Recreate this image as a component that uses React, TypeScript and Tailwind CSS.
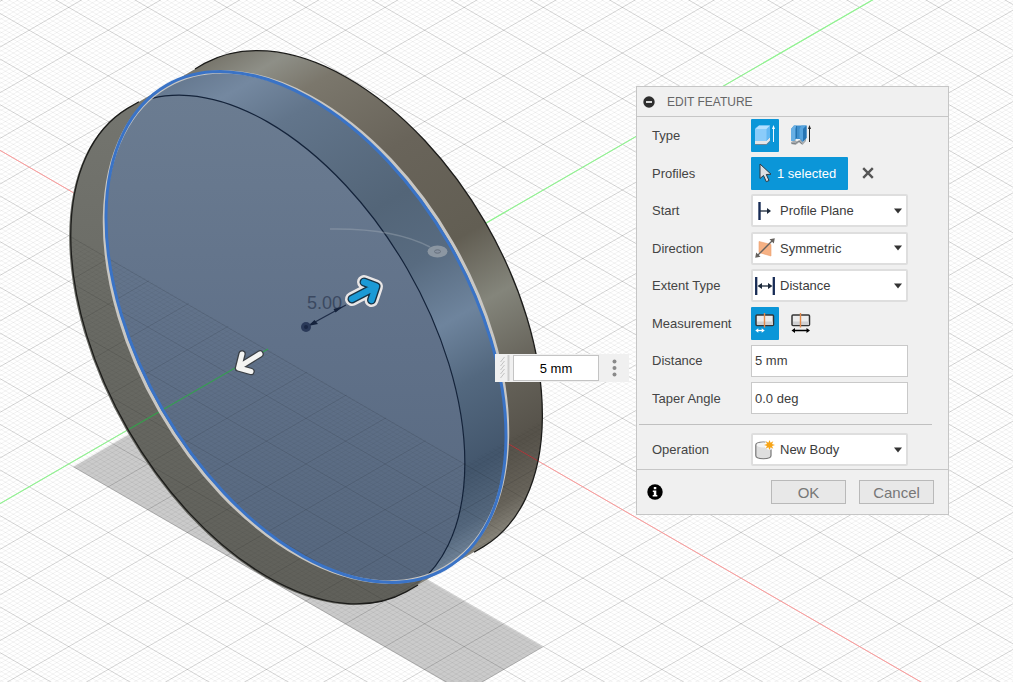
import React, { useState } from "react";
import type { ReactNode } from "react";

const ORIGIN = { x: 306, y: 327 };
const SLOPE = 0.5773;
const MAJOR = 45.66;
const DIVISIONS = 10;
const SPAN = 3000;

function gridPath(minor: boolean): string {
  const parts: string[] = [];
  const count = 50 * DIVISIONS;
  for (let i = -count; i <= count; i++) {
    const isMajor = i % DIVISIONS === 0;
    if (isMajor === minor) continue;
    const y = ORIGIN.y + (i * MAJOR) / DIVISIONS;
    for (const s of [SLOPE, -SLOPE]) {
      parts.push(
        `M${ORIGIN.x - SPAN} ${(y - s * SPAN).toFixed(2)}L${ORIGIN.x + SPAN} ${(y + s * SPAN).toFixed(2)}`
      );
    }
  }
  return parts.join("");
}

const MINOR_GRID = gridPath(true);
const MAJOR_GRID = gridPath(false);

const BODY =
  "M127.5 108.4L204.5 63.4A279 165.5 60 0 1 483.5 546.6L406.5 591.6A279 162 60 0 1 127.5 108.4Z";
const BLUE_ARROW = "M352 299L375 287M364 282L376 286.5L371.500 300";
const WHITE_ARROW = "M260 354L239 367M242 354L238.500 368L251 371.500";

function Scene() {
  return (
    <svg className="block h-full w-full" role="img" aria-label="Extruded disc on the ground plane">
      <defs>
        <linearGradient id="rim" gradientUnits="userSpaceOnUse" x1="204" y1="63" x2="483.500" y2="546.600">
          <stop offset="0" stopColor="#77756b" />
          <stop offset="0.06" stopColor="#8e8f87" />
          <stop offset="0.13" stopColor="#7b776c" />
          <stop offset="0.3" stopColor="#69645a" />
          <stop offset="0.5" stopColor="#625e53" />
          <stop offset="0.62" stopColor="#84857b" />
          <stop offset="0.75" stopColor="#66635a" />
          <stop offset="0.87" stopColor="#56524a" />
          <stop offset="0.95" stopColor="#67635a" />
          <stop offset="1" stopColor="#8a877d" />
        </linearGradient>
        <linearGradient id="rimBlue" gradientUnits="userSpaceOnUse" x1="204" y1="63" x2="483.500" y2="546.600">
          <stop offset="0" stopColor="#65788f" />
          <stop offset="0.07" stopColor="#7488a0" />
          <stop offset="0.16" stopColor="#62758b" />
          <stop offset="0.38" stopColor="#536578" />
          <stop offset="0.5" stopColor="#586b80" />
          <stop offset="0.62" stopColor="#6e849d" />
          <stop offset="0.73" stopColor="#53687f" />
          <stop offset="0.87" stopColor="#43566c" />
          <stop offset="0.95" stopColor="#54677d" />
          <stop offset="1" stopColor="#72859a" />
        </linearGradient>
        <linearGradient id="face" gradientUnits="userSpaceOnUse" x1="0" y1="95" x2="0" y2="605">
          <stop offset="0" stopColor="#74756f" />
          <stop offset="0.5" stopColor="#686963" />
          <stop offset="1" stopColor="#60605a" />
        </linearGradient>
        <linearGradient id="faceBlue" gradientUnits="userSpaceOnUse" x1="0" y1="95" x2="0" y2="590">
          <stop offset="0" stopColor="#6b7c91" />
          <stop offset="0.5" stopColor="#607189" />
          <stop offset="1" stopColor="#56677e" />
        </linearGradient>
        <clipPath id="profileClip">
          <ellipse rx="279" ry="165.500" transform="translate(306 327) rotate(60)" />
        </clipPath>
        <clipPath id="frontClip">
          <ellipse rx="279" ry="162" transform="translate(267 350) rotate(60)" />
        </clipPath>
        <clipPath id="bodyClip">
          <path d={BODY} />
        </clipPath>
        <clipPath id="belowPlane">
          <path d="M0 194.300L466 464L560 410V720H0Z" />
        </clipPath>
      </defs>

      <rect width="100%" height="100%" fill="#fff" />
      <path d="M73 467L152 421L543 647L464 693Z" fill="#cbcbcb" />
      <path d={MINOR_GRID} stroke="#000" strokeOpacity="0.05" fill="none" />
      <path d={MAJOR_GRID} stroke="#000" strokeOpacity="0.17" fill="none" />
      <path d="M-2700 -1408.400L306 327L3306 2058.900" stroke="#ff9a9a" fill="none" />
      <path d="M-2700 2062.400L306 327L3306 -1404.900" stroke="#8ff58f" strokeWidth="1.200" fill="none" />

      <path d={BODY} fill="url(#rim)" />
      <g clipPath="url(#frontClip)">
        <rect x="50" y="80" width="450" height="540" fill="url(#face)" />
      </g>
      <g clipPath="url(#profileClip)">
        <path d={BODY} fill="url(#rimBlue)" />
        <g clipPath="url(#frontClip)">
          <rect x="50" y="80" width="450" height="540" fill="url(#faceBlue)" />
        </g>
        <ellipse
          rx="279"
          ry="162"
          transform="translate(267 350) rotate(60)"
          fill="none"
          stroke="#14233a"
          strokeWidth="1.200"
        />
      </g>
      <g clipPath="url(#bodyClip)">
        <g clipPath="url(#belowPlane)">
          <path d={MINOR_GRID} stroke="#000" strokeOpacity="0.035" fill="none" />
          <path d={MAJOR_GRID} stroke="#000" strokeOpacity="0.11" fill="none" />
        </g>
        <path d="M0 503.700L268 349" stroke="#2fae4a" strokeOpacity="0.8" strokeWidth="1.200" />
        <path d="M507 443L560 473.600" stroke="#b0383c" />
      </g>

      <path
        d="M418 585L406.500 591.600A279 162 60 0 1 127.500 108.400L139 101.700M195 69L204.500 63.400A279 165.500 60 0 1 483.500 546.600L474 552.200"
        fill="none"
        stroke="#1c1c1a"
        strokeWidth="1.300"
      />
      <ellipse
        rx="278"
        ry="168.500"
        transform="translate(306 327) rotate(60)"
        fill="none"
        stroke="#c9c7c3"
        strokeWidth="3.400"
      />
      <ellipse
        rx="279"
        ry="165.500"
        transform="translate(306 327) rotate(60)"
        fill="none"
        stroke="#3a73c6"
        strokeWidth="3"
      />

      <path d="M330 229Q394 228 430 247" fill="none" stroke="#a4afba" strokeOpacity="0.4" strokeWidth="1.500" />
      <ellipse cx="437.500" cy="251.500" rx="10" ry="6" fill="#98a1aa" fillOpacity="0.8" />
      <ellipse cx="437.500" cy="251.500" rx="3" ry="1.700" fill="#8791a0" stroke="#66707c" />

      <text
        x="307"
        y="309"
        fontSize="18"
        fill="#3b4961"
        className="font-['Liberation_Sans',Arial,sans-serif]"
      >
        5.00
      </text>
      <path d="M306 327L346 305" stroke="#1f2d48" strokeWidth="1.300" />
      <path d="M308 326L314.500 320L318 324ZM343 306.500L333.500 309L335.500 312.500Z" fill="#14223c" />
      <circle cx="306" cy="327" r="5" fill="#2a3958" />
      <circle cx="306" cy="327" r="2" fill="#1a2744" />

      <g fill="none" strokeLinecap="round" strokeLinejoin="round">
        <path d={WHITE_ARROW} stroke="#3b4046" strokeWidth="7.500" />
        <path d={WHITE_ARROW} stroke="#f4f4f2" strokeWidth="5" />
        <path d={BLUE_ARROW} stroke="#e9e6e6" strokeWidth="14" />
        <path d={BLUE_ARROW} stroke="#173447" strokeWidth="9" />
        <path d={BLUE_ARROW} stroke="#1b9ad6" strokeWidth="6.200" />
      </g>
    </svg>
  );
}

function ExtrudeIcon() {
  return (
    <svg width="20" height="21" viewBox="0 0 20 21" aria-hidden="true">
      <path d="M0 15.500V19H11.500L15 15.500V12L11.500 15.500Z" fill="#e4e6e8" />
      <path d="M0 19.500H11.700L15.300 16" fill="none" stroke="#6d8494" />
      <path d="M0 4Q0 3 1 2.500L4 .5H15V12L11.500 16H0Z" fill="#62b8f3" />
      <path d="M.5 4L4 .5H15L11.500 4Z" fill="#b4e0ff" />
      <path d="M0 4H11.500V16H0Z" fill="#8accfa" />
      <path d="M18.500 3V17" stroke="#eef8ff" />
      <path d="M18.500 0L20 4H17Z" fill="#fff" />
    </svg>
  );
}

function ThinExtrudeIcon() {
  return (
    <svg width="20" height="21" viewBox="0 0 20 21" aria-hidden="true">
      <path d="M0 17L4 15L6 16.500L10 14L12 17L15 13V16L11.500 20L8 17.500L4.500 20L0 19Z" fill="#a7abae" />
      <path d="M1 18.500L4.500 18.500L8 16L11 19" fill="none" stroke="#73787c" strokeWidth=".8" />
      <path d="M0 4L3 .5H15.500V13L11.500 17L9 14H5L3 16H0Z" fill="#3f8fcd" />
      <path d="M0 4L3 .5H5.500L4 4V15L2.500 16H0Z" fill="#68afe4" />
      <path d="M8.500 4L10.500 .5H15.500L12 4V16L8.500 13Z" fill="#57a4de" />
      <path d="M12 4L15.500 .5V13L12 16.500Z" fill="#2775b4" />
      <path d="M5.500 1L5.500 13" stroke="#2673ad" />
      <path d="M18.500 3V17" stroke="#222" />
      <path d="M18.500 0L20 4H17Z" fill="#222" />
    </svg>
  );
}

function MeasureIcon({ whole }: { whole: boolean }) {
  const ink = whole ? "#000" : "#fff";
  return (
    <svg width="20" height="20" viewBox="0 0 20 20" aria-hidden="true">
      <rect x="1" y="2" width="17.500" height="10.500" rx="1" fill="#ececec" stroke="#343434" strokeWidth="1.500" />
      <path d="M2 8.500H18V12H2Z" fill="#cfd0d2" />
      <path d="M9.500 0V14.500" stroke="#e58a4a" strokeWidth="1.400" />
      {whole ? (
        <g>
          <path d="M3 17.500H17" stroke={ink} strokeWidth="1.500" />
          <path d="M.5 17.500L4 15V20ZM19 17.500L15.500 15V20Z" fill={ink} />
        </g>
      ) : (
        <g>
          <path d="M2 17.500H8" stroke={ink} strokeWidth="1.300" />
          <path d="M.3 17.500L3.300 15.300V19.700ZM9.700 17.500L6.700 15.300V19.700Z" fill={ink} />
        </g>
      )}
    </svg>
  );
}

function CursorIcon() {
  return (
    <svg width="14" height="20" viewBox="0 0 14 20" aria-hidden="true">
      <path
        d="M1 1V15.500L4.500 12.500L7.300 18.700L10 17.500L7.300 11.500L12 11.200Z"
        fill="#dcdfe2"
        stroke="#2c3942"
        strokeLinejoin="round"
      />
    </svg>
  );
}

function StartIcon() {
  return (
    <svg width="20" height="20" viewBox="0 0 20 20" aria-hidden="true">
      <path d="M4.500 1V19" stroke="#172b55" strokeWidth="2.400" />
      <path d="M5 10H14" stroke="#1d2a3c" strokeWidth="1.300" />
      <path d="M12 7L16 10L12 13Z" fill="#1d2a3c" />
    </svg>
  );
}

function SymmetricIcon() {
  return (
    <svg width="20" height="20" viewBox="0 0 20 20" aria-hidden="true">
      <path d="M4 3.500L16 6.500V18L4 14.500Z" fill="#f6b184" stroke="#eda06d" strokeWidth=".6" />
      <path d="M2 18L18 2" stroke="#66625e" strokeWidth="1.300" />
      <path d="M19.800 .2L18.800 5.500L14.500 1.200ZM.2 19.800L1.200 14.500L5.500 18.800Z" fill="#66625e" />
    </svg>
  );
}

function DistanceIcon() {
  return (
    <svg width="20" height="20" viewBox="0 0 20 20" aria-hidden="true">
      <path d="M1.200 1V19M18.800 1V19" stroke="#172b55" strokeWidth="2.300" />
      <path d="M4 10H16" stroke="#1d2a3c" strokeWidth="1.300" />
      <path d="M2.500 10L7 7V13ZM17.500 10L13 7V13Z" fill="#1d2a3c" />
    </svg>
  );
}

function NewBodyIcon() {
  return (
    <svg width="20" height="20" viewBox="0 0 20 20" aria-hidden="true">
      <path
        d="M.8 5V15.500C.8 19.800 16 19.800 16 15.500V5C16 1 .8 1 .8 5Z"
        fill="#dedede"
        stroke="#777"
        strokeWidth="1.200"
      />
      <ellipse cx="8.400" cy="5" rx="6.800" ry="2.600" fill="#f4f4f4" />
      <circle cx="14.500" cy="5" r="5" fill="#fff" fillOpacity=".8" />
      <path
        d="M14.500 0L15.600 2.800L18.300 1.200L17 4L20 5L17 6L18.300 8.800L15.600 7.200L14.500 10L13.400 7.200L10.700 8.800L12 6L9 5L12 4L10.700 1.200L13.400 2.800Z"
        fill="#f7a416"
      />
    </svg>
  );
}

function Row({ label, htmlFor, children }: { label: string; htmlFor?: string; children: ReactNode }) {
  return (
    <div className="flex items-center pl-[15px]">
      {htmlFor ? (
        <label htmlFor={htmlFor} className="w-[99px] shrink-0">
          {label}
        </label>
      ) : (
        <span className="w-[99px] shrink-0">{label}</span>
      )}
      {children}
    </div>
  );
}

function Picker({ id, icon, options }: { id: string; icon: ReactNode; options: string[] }) {
  return (
    <div className="relative h-[33px] w-[157px]">
      <select
        id={id}
        className="h-full w-full appearance-none rounded-[2px] border-2 border-[#dedede] bg-white pl-[27px] pr-6 text-[13px] text-[#3c3c3c] outline-none"
      >
        {options.map((o) => (
          <option key={o}>{o}</option>
        ))}
      </select>
      <span className="pointer-events-none absolute inset-y-0 left-1 flex items-center">{icon}</span>
      <span className="pointer-events-none absolute inset-y-0 right-[6px] flex items-center">
        <svg width="8" height="6" viewBox="0 0 8 6" aria-hidden="true">
          <path d="M0 .5H8L4 5.500Z" fill="#333" />
        </svg>
      </span>
    </div>
  );
}

function Toggle({
  on,
  label,
  onClick,
  children,
}: {
  on: boolean;
  label: string;
  onClick: () => void;
  children: ReactNode;
}) {
  return (
    <button
      type="button"
      aria-pressed={on}
      aria-label={label}
      onClick={onClick}
      className={
        on
          ? "mr-2 flex h-[33px] w-7 items-center justify-center rounded-[1px] bg-[#0b96d8]"
          : "mr-2 flex h-[33px] w-7 items-center justify-center"
      }
    >
      {children}
    </button>
  );
}

function TextField({ id, value }: { id: string; value: string }) {
  return (
    <input
      id={id}
      defaultValue={value}
      className="h-8 w-[157px] border border-[#c9c9c9] bg-white px-[3px] text-[13px] text-[#3c3c3c] outline-none"
    />
  );
}

function FeaturePanel() {
  const [thin, setThin] = useState(false);
  const [whole, setWhole] = useState(false);
  return (
    <section
      aria-label="Edit feature"
      className="absolute left-[636px] top-[86px] w-[313px] border border-[#c6c6c6] bg-[#f0f0f0] text-[13px] text-[#444]"
    >
      <header className="flex h-[30px] items-center border-b border-[#c6c6c6] pl-[6px]">
        <button type="button" aria-label="Collapse" className="mr-3">
          <svg width="12" height="12" viewBox="0 0 12 12" aria-hidden="true">
            <circle cx="6" cy="6" r="5.700" fill="#2e2e2e" />
            <path d="M3 6H9" stroke="#f0f0f0" strokeWidth="1.800" />
          </svg>
        </button>
        <h1 className="text-[12px] text-[#666]">EDIT FEATURE</h1>
      </header>

      <div className="grid h-[300px] grid-rows-8">
        <Row label="Type">
          <Toggle on={!thin} label="Extrude" onClick={() => setThin(false)}>
            <ExtrudeIcon />
          </Toggle>
          <Toggle on={thin} label="Thin extrude" onClick={() => setThin(true)}>
            <ThinExtrudeIcon />
          </Toggle>
        </Row>
        <Row label="Profiles">
          <button
            type="button"
            className="flex h-[33px] w-[97px] items-center gap-1 rounded-[1px] bg-[#0b96d8] pl-2 text-white"
          >
            <CursorIcon />
            <span className="whitespace-nowrap">1 selected</span>
          </button>
          <button type="button" aria-label="Clear selection" className="ml-[14px]">
            <svg width="12" height="12" viewBox="0 0 12 12" aria-hidden="true">
              <path d="M1.200 1.200L10.800 10.800M10.800 1.200L1.200 10.800" stroke="#555" strokeWidth="2.400" />
            </svg>
          </button>
        </Row>
        <Row label="Start" htmlFor="start">
          <Picker id="start" icon={<StartIcon />} options={["Profile Plane", "Offset", "Object"]} />
        </Row>
        <Row label="Direction" htmlFor="direction">
          <Picker id="direction" icon={<SymmetricIcon />} options={["Symmetric", "One Side", "Two Sides"]} />
        </Row>
        <Row label="Extent Type" htmlFor="extent">
          <Picker id="extent" icon={<DistanceIcon />} options={["Distance", "All"]} />
        </Row>
        <Row label="Measurement">
          <Toggle on={!whole} label="Half length" onClick={() => setWhole(false)}>
            <MeasureIcon whole={false} />
          </Toggle>
          <Toggle on={whole} label="Whole length" onClick={() => setWhole(true)}>
            <MeasureIcon whole />
          </Toggle>
        </Row>
        <Row label="Distance" htmlFor="distance">
          <TextField id="distance" value="5 mm" />
        </Row>
        <Row label="Taper Angle" htmlFor="taper">
          <TextField id="taper" value="0.0 deg" />
        </Row>
      </div>

      <hr className="mb-2 ml-[2px] mr-4 mt-[7px] border-[#c0c0c0]" />
      <Row label="Operation" htmlFor="operation">
        <Picker id="operation" icon={<NewBodyIcon />} options={["New Body", "Join", "Cut", "Intersect"]} />
      </Row>

      <footer className="mt-[3px] flex h-[45px] items-center border-t border-[#c6c6c6] pl-[10px] pr-[14px]">
        <button type="button" aria-label="Information" className="mr-auto">
          <svg width="16" height="16" viewBox="0 0 16 16" aria-hidden="true">
            <circle cx="8" cy="8" r="7.700" fill="#000" />
            <path d="M6.800 3H9.300V5.200H6.800ZM5.800 6.500H9.300V11H10.300V12.500H5.700V11H6.800V8H5.800Z" fill="#fff" />
          </svg>
        </button>
        <div className="flex gap-[13px] text-[15px] text-[#777]">
          <button type="button" className="h-6 w-[75px] border border-[#b9b9b9] bg-[#e8e8e8] leading-none">
            OK
          </button>
          <button type="button" className="h-6 w-[75px] border border-[#b9b9b9] bg-[#e8e8e8] leading-none">
            Cancel
          </button>
        </div>
      </footer>
    </section>
  );
}

function FloatingValue() {
  return (
    <div className="absolute left-[495px] top-[354px] flex h-7 w-[134px] items-center bg-[#f0f0f0]">
      <svg width="18" height="28" viewBox="0 0 18 28" aria-hidden="true">
        <path
          d="M5.500 8L9.500 3M5.500 12L9.500 7M5.500 16L9.500 11M5.500 20L9.500 15M5.500 24L9.500 19"
          stroke="#c2c2c2"
        />
        <path d="M13.500 1V27" stroke="#cdcdcd" strokeWidth="2" />
      </svg>
      <input
        aria-label="Extrude distance"
        defaultValue="5 mm"
        className="h-[26px] w-[86px] border border-[#c4c4c4] bg-white text-center text-[13px] text-black outline-none"
      />
      <button type="button" aria-label="More options" className="ml-[13px]">
        <svg width="5" height="18" viewBox="0 0 5 18" aria-hidden="true">
          <circle cx="2.500" cy="2.500" r="2" fill="#8a8a8a" />
          <circle cx="2.500" cy="9" r="2" fill="#8a8a8a" />
          <circle cx="2.500" cy="15.500" r="2" fill="#8a8a8a" />
        </svg>
      </button>
    </div>
  );
}

export default function App() {
  return (
    <main className="relative h-screen w-full overflow-hidden font-['Liberation_Sans',Arial,sans-serif]">
      <Scene />
      <FloatingValue />
      <FeaturePanel />
    </main>
  );
}
